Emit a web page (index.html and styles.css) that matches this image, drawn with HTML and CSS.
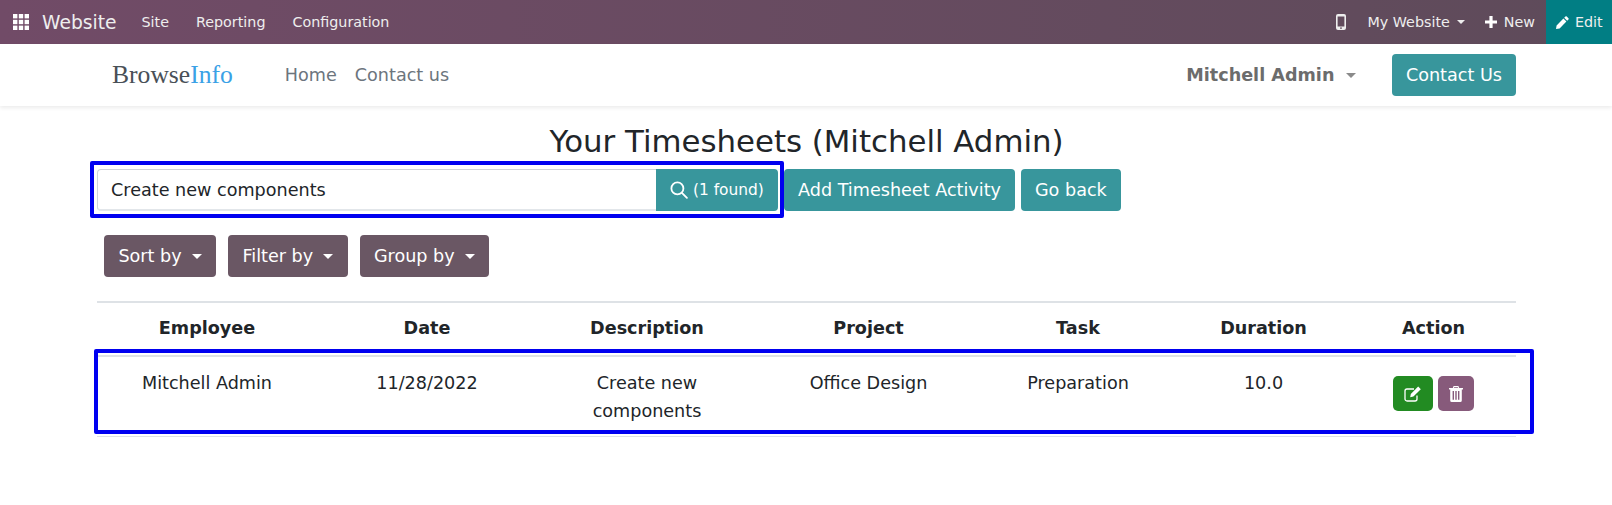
FILE: index.html
```html
<!DOCTYPE html>
<html>
	<head>
		<meta charset="UTF-8">
		<title>Your Timesheets</title>
		<link rel="stylesheet" href="styles.css">
	</head>
	<body>
		<nav class="topbar">
			<svg class="apps" width="16" height="16" viewBox="0 0 16 16" fill="#fff">
				<rect x="0" y="0" width="4.4" height="4.4"/><rect x="5.8" y="0" width="4.4" height="4.4"/><rect x="11.6" y="0" width="4.4" height="4.4"/>
				<rect x="0" y="5.8" width="4.4" height="4.4"/><rect x="5.8" y="5.8" width="4.4" height="4.4"/><rect x="11.6" y="5.8" width="4.4" height="4.4"/>
				<rect x="0" y="11.6" width="4.4" height="4.4"/><rect x="5.8" y="11.6" width="4.4" height="4.4"/><rect x="11.6" y="11.6" width="4.4" height="4.4"/>
			</svg>
			<span class="brand">Website</span>
			<a class="topbar-link">Site</a>
			<a class="topbar-link">Reporting</a>
			<a class="topbar-link">Configuration</a>
			<div class="topbar-right">
				<svg class="phone" width="10" height="16" viewBox="0 0 10 16">
					<path fill="#eee" fill-rule="evenodd" d="M2 0h6a2 2 0 0 1 2 2v12a2 2 0 0 1-2 2H2a2 2 0 0 1-2-2V2a2 2 0 0 1 2-2zM1.600 2.400v10h6.800v-10zM5 13.200a.9.9 0 1 0 0 1.800.9.9 0 0 0 0-1.800z"/>
				</svg>
				<a class="topbar-item">My Website<i class="caret caret-small"></i></a>
				<a class="topbar-item new">
					<svg width="12" height="12" viewBox="0 0 12 12" fill="#fff"><path d="M4.400 0h3.200v4.400H12v3.200H7.600V12H4.400V7.600H0V4.400h4.400z"/></svg>
					New
				</a>
				<a class="edit">
					<svg width="13" height="13" viewBox="0 0 13 13" fill="#fff"><path d="M9.400.6a1 1 0 0 1 1.400 0l1.600 1.600a1 1 0 0 1 0 1.400l-1.200 1.200-3-3zM7.400 2.600l3 3L3.600 12.400 0 13l.6-3.600z"/></svg>
					Edit
				</a>
			</div>
		</nav>

		<header class="site-header">
			<a class="logo">Browse<span>Info</span></a>
			<a class="site-link">Home</a>
			<a class="site-link">Contact us</a>
			<a class="user">Mitchell Admin<i class="caret"></i></a>
			<a class="btn btn-contact">Contact Us</a>
		</header>

		<main class="content">
			<h1>Your Timesheets (Mitchell Admin)</h1>
			<div class="search-row">
				<div class="search">
					<div class="search-input">Create new components</div>
					<div class="search-btn">
						<svg width="18" height="18" viewBox="0 0 18 18" fill="none" stroke="#fff" stroke-width="1.8" stroke-linecap="round"><circle cx="7.400" cy="7.400" r="6"/><path d="M11.900 11.900l5 5"/></svg>
						<span>(1 found)</span>
					</div>
					<div class="mark mark-search"></div>
				</div>
				<a class="btn">Add Timesheet Activity</a>
				<a class="btn">Go back</a>
			</div>

			<div class="filters">
				<a class="btn-drop">Sort by<i class="caret"></i></a>
				<a class="btn-drop">Filter by<i class="caret"></i></a>
				<a class="btn-drop">Group by<i class="caret"></i></a>
			</div>

			<div class="table-wrap">
				<table>
					<thead>
						<tr>
							<th class="col-employee">Employee</th>
							<th class="col-date">Date</th>
							<th class="col-desc">Description</th>
							<th class="col-project">Project</th>
							<th class="col-task">Task</th>
							<th class="col-duration">Duration</th>
							<th class="col-action">Action</th>
						</tr>
					</thead>
					<tbody>
						<tr>
							<td>Mitchell Admin</td>
							<td>11/28/2022</td>
							<td>Create new components</td>
							<td>Office Design</td>
							<td>Preparation</td>
							<td>10.0</td>
							<td>
								<div class="actions">
									<a class="act act-edit">
										<svg width="18" height="16" viewBox="0 0 18 16"><path fill="none" stroke="#fff" stroke-width="1.3" d="M13 9.500V13a2 2 0 0 1-2 2H3a2 2 0 0 1-2-2V5a2 2 0 0 1 2-2h7"/><path fill="#fff" d="M14.200.6l2.600 2.600-7.400 7.400-3.200.6.6-3.200z"/></svg>
									</a>
									<a class="act act-delete">
										<svg width="14" height="16" viewBox="0 0 14 16"><path fill="#fff" fill-rule="evenodd" d="M4.600 0h4.800l.8 2H14v1.600h-1.200V14.400a1.600 1.600 0 0 1-1.600 1.600H2.800a1.600 1.600 0 0 1-1.600-1.600V3.600H0V2h3.800zM5.200 1.200L4.900 2h4.200l-.3-.8zM3.600 5v8.800h1.400V5zM6.300 5v8.800h1.400V5zM9 5v8.800h1.400V5z"/></svg>
									</a>
								</div>
							</td>
						</tr>
					</tbody>
				</table>
				<div class="mark mark-row"></div>
			</div>
		</main>
	</body>
</html>
```

FILE: styles.css
```css
*{
	margin: 0;
	padding: 0;
	box-sizing: border-box;
}
html,body{
	height: 505px;
	overflow: hidden;
}
body{
	background: #fff;
	color: #212529;
	font-family: "DejaVu Sans", sans-serif;
	font-size: 17.6px;
}
.topbar{
	display: flex;
	align-items: center;
	height: 44px;
	padding-left: 13px;
	background: linear-gradient(90deg, #714b67, #5e4b5a);
	color: #eee;
	font-size: 14.3px;
}
.apps{
	margin-right: 13px;
}
.brand{
	font-size: 18.7px;
	margin-right: 25px;
}
.topbar-link{
	margin-right: 27px;
}
.topbar-right{
	display: flex;
	align-items: center;
	height: 100%;
	margin-left: auto;
}
.phone{
	margin-right: 21px;
}
.topbar-item{
	display: flex;
	align-items: center;
}
.new{
	gap: 7px;
	margin-left: 20px;
	margin-right: 11px;
}
.edit{
	display: flex;
	align-items: center;
	gap: 6px;
	width: 66px;
	height: 100%;
	padding-left: 10px;
	background: #017e84;
}
.caret{
	display: inline-block;
	margin-left: 10px;
	border-top: 5.28px solid currentColor;
	border-left: 5.28px solid transparent;
	border-right: 5.28px solid transparent;
}
.caret-small{
	margin-left: 7px;
	border-top-width: 4px;
	border-left-width: 4px;
	border-right-width: 4px;
}
.site-header{
	display: flex;
	align-items: center;
	height: 62px;
	padding: 0 96px 0 112px;
	box-shadow: 0 2px 4px rgba(0,0,0,.08);
}
.logo{
	font-family: "Liberation Serif", serif;
	font-size: 25.6px;
	color: #495057;
	margin-right: 52px;
}
.logo span{
	color: #3aa1e6;
}
.site-link{
	color: #6c757d;
	margin-right: 18px;
}
.user{
	display: flex;
	align-items: center;
	margin-left: auto;
	margin-right: 36px;
	font-weight: bold;
	color: #6c6c6c;
}
.user .caret{
	margin-left: 11.5px;
	color: #8a8a8a;
}
.btn{
	display: flex;
	align-items: center;
	height: 42px;
	padding: 0 14px;
	border-radius: 4px;
	background: #38969c;
	color: #fff;
}
.content{
	padding: 17px 96px 0 97px;
}
h1{
	font-size: 30.8px;
	font-weight: normal;
	line-height: 36px;
	text-align: center;
	color: #212529;
}
.search-row{
	display: flex;
	gap: 6px;
	margin-top: 10px;
}
.search{
	position: relative;
	display: flex;
	width: 681px;
	height: 42px;
}
.search-input{
	flex: 1;
	padding-left: 13px;
	line-height: 40px;
	border: 1px solid #ced4da;
	border-right: 0;
	border-bottom: 2px solid #e2e6ea;
	border-radius: 4px 0 0 4px;
}
.search-btn{
	display: flex;
	align-items: center;
	gap: 5px;
	width: 122px;
	padding-left: 14px;
	background: #38969c;
	color: #fff;
	font-size: 15.4px;
	border-radius: 0 4px 4px 0;
}
.mark{
	position: absolute;
	border: 4px solid #0000f0;
	border-radius: 2px;
}
.mark-search{
	left: -7px;
	top: -8px;
	width: 694px;
	height: 57px;
}
.filters{
	display: flex;
	gap: 12px;
	margin: 24px 0 0 7px;
}
.btn-drop{
	display: flex;
	align-items: center;
	height: 42px;
	padding: 0 14.4px;
	border-radius: 4px;
	background: #6a5764;
	color: #fff;
}
.table-wrap{
	position: relative;
	margin-top: 24px;
}
table{
	width: 1419px;
	border-collapse: collapse;
	table-layout: fixed;
	text-align: center;
}
thead tr{
	border-top: 2px solid #dee2e6;
	border-bottom: 2px solid #dee2e6;
}
th{
	height: 54px;
	padding-bottom: 2px;
}
.col-employee,.col-date,.col-desc{
	width: 220px;
}
.col-project{
	width: 223px;
}
.col-task{
	width: 196px;
}
.col-duration{
	width: 175px;
}
tbody tr{
	border-bottom: 1px solid #dee2e6;
}
td{
	vertical-align: top;
	height: 80px;
	padding: 12px 20px 0;
	line-height: 28px;
}
.actions{
	display: flex;
	justify-content: center;
	gap: 5px;
	margin-top: 7px;
}
.act{
	display: flex;
	align-items: center;
	justify-content: center;
	height: 35px;
	border-radius: 5px;
}
.act-edit{
	width: 40px;
	background: #228b22;
}
.act-delete{
	width: 36px;
	background: #875a7b;
}
.mark-row{
	left: -3px;
	top: 48px;
	width: 1440px;
	height: 85px;
}
```
